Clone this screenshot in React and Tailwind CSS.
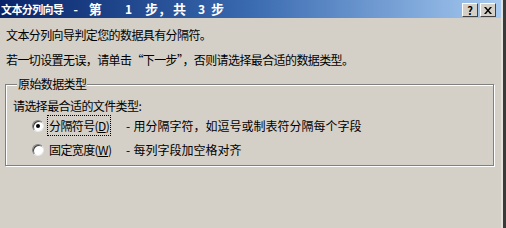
export default function App() {
  const font = { fontFamily: '"Noto Sans CJK SC", "Noto Sans", sans-serif' };

  return (
    <div
      className="w-[506px] h-[228px] bg-[#d4d0c8] flex overflow-hidden text-black text-[12px] leading-[16px] tracking-[-0.6px]"
      style={font}
    >
      <div className="flex-1 flex flex-col">
        {/* title bar */}
        <div className="h-[18px] bg-gradient-to-r from-[#0a246a] via-[#3a6ab0] to-[#a6caf0] flex items-center justify-between pl-[1px] pr-[5px]">
          <div className="flex items-baseline text-white font-bold tracking-normal">
            <span className="text-[11px] tracking-[-0.6px]">文本分列向导</span>
            <span className="ml-[10px] text-[12px]">-</span>
            <span className="ml-[11px] text-[13px]">第</span>
            <span className="ml-[23px] text-[12px]">1</span>
            <span className="ml-[13px] text-[13px]">步，</span>
            <span className="ml-[2px] text-[13px]">共</span>
            <span className="ml-[12px] text-[12px]">3</span>
            <span className="ml-[6px] text-[13px]">步</span>
          </div>
          <div className="flex gap-[2px] mt-[2px]">
            <TitleButton>?</TitleButton>
            <TitleButton>
              <svg width="8" height="7" viewBox="0 0 8 7">
                <path d="M0 0h2l2 2.5L6 0h2L5 3.5 8 7H6L4 4.5 2 7H0l3-3.5z" fill="#000" />
              </svg>
            </TitleButton>
          </div>
        </div>

        <p className="mt-[9px] ml-[6px]">文本分列向导判定您的数据具有分隔符。</p>
        <p className="mt-[9px] ml-[6px]">若一切设置无误，请单击“下一步”，否则请选择最合适的数据类型。</p>

        <fieldset className="mt-[8px] ml-[5px] w-[489px] border border-[#808080] shadow-[1px_1px_0_#ffffff,inset_1px_1px_0_#ffffff] pl-[7px] pb-[6px]">
          <legend className="ml-[4px] px-[1px] bg-[#d4d0c8]">原始数据类型</legend>
          <p className="mt-[6px]">请选择最合适的文件类型:</p>

          <div className="mt-[3px] ml-[19px] flex items-center h-[18px]">
            <Radio checked />
            <span className="w-[82px] pl-[3px]">
              <span className="border border-dotted border-black px-[1px] py-[1px]">
                分隔符号(<u>D</u>)
              </span>
            </span>
            <span>-</span>
            <span className="ml-[4px] tracking-normal">用分隔字符，如逗号或制表符分隔每个字段</span>
          </div>

          <div className="mt-[6px] ml-[19px] flex items-center h-[18px]">
            <Radio />
            <span className="w-[82px] pl-[5px]">
              固定宽度(<u>W</u>)
            </span>
            <span>-</span>
            <span className="ml-[4px] tracking-normal">每列字段加空格对齐</span>
          </div>
        </fieldset>
      </div>

      {/* window right edge */}
      <div className="w-[2px] bg-[#e4e1db]" />
      <div className="w-[3px] bg-[#3a3a3a]" />
    </div>
  );
}

function TitleButton({ children }) {
  return (
    <div className="w-[16px] h-[14px] bg-[#d4d0c8] border border-t-white border-l-white border-b-[#404040] border-r-[#404040] flex items-center justify-center font-bold text-[11px] leading-none tracking-normal">
      {children}
    </div>
  );
}

function Radio({ checked }) {
  return (
    <div className="w-[12px] h-[12px] shrink-0 rounded-full bg-white border border-[#808080] border-b-[#e8e8e8] border-r-[#e8e8e8] shadow-[inset_1px_1px_0_#404040] flex items-center justify-center">
      {checked && <div className="w-[4px] h-[4px] rounded-full bg-black" />}
    </div>
  );
}
